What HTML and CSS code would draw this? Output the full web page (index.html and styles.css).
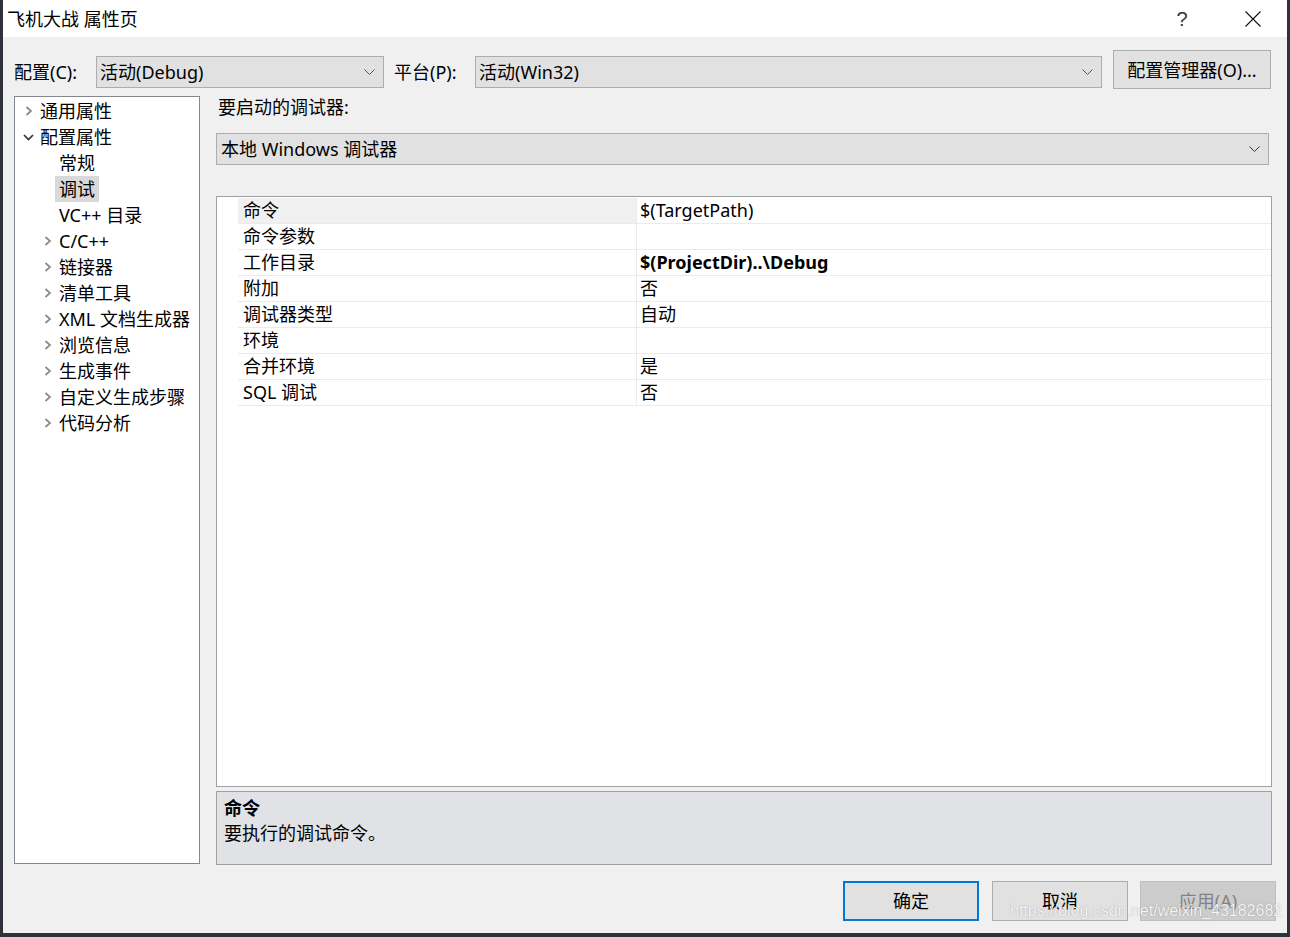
FILE: index.html
```html
<!DOCTYPE html>
<html lang="zh-CN">
<head>
<meta charset="utf-8">
<title>飞机大战 属性页</title>
<link rel="stylesheet" href="styles.css">
</head>
<body>
<div class="window">
  <div class="titlebar">
    <span class="title">飞机大战 属性页</span>
    <span class="help">?</span>
    <span class="close"><svg width="16" height="16" viewBox="0 0 16 16"><path d="M0.5 0.5 L15.5 15.5 M15.5 0.5 L0.5 15.5" stroke="#111" stroke-width="1.1" fill="none"/></svg></span>
  </div>
  <div class="content">
    <div class="config-row">
      <span class="cfg-label lab1">配置(C):</span>
      <div class="combo c1"><span class="val">活动(Debug)</span><svg class="chev" width="11" height="6" viewBox="0 0 11 6"><path d="M0.5 0.5 L5.5 5.5 L10.5 0.5" stroke="#555" stroke-width="1" fill="none"/></svg></div>
      <span class="cfg-label lab2">平台(P):</span>
      <div class="combo c2"><span class="val">活动(Win32)</span><svg class="chev" width="11" height="6" viewBox="0 0 11 6"><path d="M0.5 0.5 L5.5 5.5 L10.5 0.5" stroke="#555" stroke-width="1" fill="none"/></svg></div>
      <button class="btn mgr">配置管理器(O)...</button>
    </div>
    <div class="main">
      <div class="tree">
        <div class="item lv1"><span class="arrow"><svg class="col" width="8" height="10" viewBox="0 0 8 10"><path d="M1.5 1 L6 5 L1.5 9" stroke="#8a8a8a" stroke-width="1.7" fill="none"/></svg></span><span class="lbl">通用属性</span></div>
        <div class="item lv1"><span class="arrow"><svg class="exp" width="11" height="7" viewBox="0 0 11 7"><path d="M1 1 L5.5 5.5 L10 1" stroke="#333" stroke-width="1.7" fill="none"/></svg></span><span class="lbl">配置属性</span></div>
        <div class="item lv2"><span class="arrow"></span><span class="lbl">常规</span></div>
        <div class="item lv2 selected"><span class="arrow"></span><span class="lbl">调试</span></div>
        <div class="item lv2"><span class="arrow"></span><span class="lbl">VC++ 目录</span></div>
        <div class="item lv2"><span class="arrow"><svg class="col" width="8" height="10" viewBox="0 0 8 10"><path d="M1.5 1 L6 5 L1.5 9" stroke="#8a8a8a" stroke-width="1.7" fill="none"/></svg></span><span class="lbl">C/C++</span></div>
        <div class="item lv2"><span class="arrow"><svg class="col" width="8" height="10" viewBox="0 0 8 10"><path d="M1.5 1 L6 5 L1.5 9" stroke="#8a8a8a" stroke-width="1.7" fill="none"/></svg></span><span class="lbl">链接器</span></div>
        <div class="item lv2"><span class="arrow"><svg class="col" width="8" height="10" viewBox="0 0 8 10"><path d="M1.5 1 L6 5 L1.5 9" stroke="#8a8a8a" stroke-width="1.7" fill="none"/></svg></span><span class="lbl">清单工具</span></div>
        <div class="item lv2"><span class="arrow"><svg class="col" width="8" height="10" viewBox="0 0 8 10"><path d="M1.5 1 L6 5 L1.5 9" stroke="#8a8a8a" stroke-width="1.7" fill="none"/></svg></span><span class="lbl">XML 文档生成器</span></div>
        <div class="item lv2"><span class="arrow"><svg class="col" width="8" height="10" viewBox="0 0 8 10"><path d="M1.5 1 L6 5 L1.5 9" stroke="#8a8a8a" stroke-width="1.7" fill="none"/></svg></span><span class="lbl">浏览信息</span></div>
        <div class="item lv2"><span class="arrow"><svg class="col" width="8" height="10" viewBox="0 0 8 10"><path d="M1.5 1 L6 5 L1.5 9" stroke="#8a8a8a" stroke-width="1.7" fill="none"/></svg></span><span class="lbl">生成事件</span></div>
        <div class="item lv2"><span class="arrow"><svg class="col" width="8" height="10" viewBox="0 0 8 10"><path d="M1.5 1 L6 5 L1.5 9" stroke="#8a8a8a" stroke-width="1.7" fill="none"/></svg></span><span class="lbl">自定义生成步骤</span></div>
        <div class="item lv2"><span class="arrow"><svg class="col" width="8" height="10" viewBox="0 0 8 10"><path d="M1.5 1 L6 5 L1.5 9" stroke="#8a8a8a" stroke-width="1.7" fill="none"/></svg></span><span class="lbl">代码分析</span></div>
      </div>
      <div class="pane">
        <div class="pane-label">要启动的调试器:</div>
        <div class="combo big"><span class="val">本地 Windows 调试器</span><svg class="chev" width="11" height="6" viewBox="0 0 11 6"><path d="M0.5 0.5 L5.5 5.5 L10.5 0.5" stroke="#333" stroke-width="1" fill="none"/></svg></div>
        <div class="grid">
          <div class="row sel"><div class="name">命令</div><div class="value">$(TargetPath)</div></div>
          <div class="row"><div class="name">命令参数</div><div class="value"></div></div>
          <div class="row"><div class="name">工作目录</div><div class="value bold">$(ProjectDir)..\Debug</div></div>
          <div class="row"><div class="name">附加</div><div class="value">否</div></div>
          <div class="row"><div class="name">调试器类型</div><div class="value">自动</div></div>
          <div class="row"><div class="name">环境</div><div class="value"></div></div>
          <div class="row"><div class="name">合并环境</div><div class="value">是</div></div>
          <div class="row"><div class="name">SQL 调试</div><div class="value">否</div></div>
        </div>
        <div class="desc">
          <div class="desc-title">命令</div>
          <div class="desc-text">要执行的调试命令。</div>
        </div>
      </div>
    </div>
    <div class="buttons">
      <button class="btn dlg ok">确定</button>
      <button class="btn dlg cancel">取消</button>
      <button class="btn dlg apply">应用(A)</button>
    </div>
  </div>
  <div class="watermark">https://blog.csdn.net/weixin_43182682</div>
</div>
</body>
</html>
```

FILE: styles.css
```css
* { box-sizing: border-box; }
html, body { margin: 0; padding: 0; }
body {
  width: 1290px;
  height: 937px;
  overflow: hidden;
  background: #2f323b;
  font-family: "Noto Sans", "Noto Sans CJK SC", sans-serif;
  font-size: 18px;
  color: #000;
}
.window {
  position: relative;
  margin-left: 3px;
  width: 1284px;
  height: 933px;
  background: #f0f0f0;
  display: flex;
  flex-direction: column;
}
.titlebar {
  flex: none;
  height: 37px;
  background: #fff;
  display: flex;
  align-items: center;
  padding: 0 26px 0 4px;
}
.title { flex: 1; line-height: 24px; white-space: nowrap; }
.help {
  width: 14px;
  text-align: center;
  font-family: "Liberation Sans", sans-serif;
  font-size: 20px;
  line-height: 24px;
  color: #333;
  margin-right: 56px;
}
.close { width: 16px; height: 16px; }
.close svg { display: block; }

.content {
  flex: 1;
  display: flex;
  flex-direction: column;
  padding: 13px 15px 0 11px;
}
.config-row { display: flex; align-items: flex-start; height: 39px; flex: none; }
.cfg-label { margin-top: 6px; line-height: 32px; white-space: nowrap; }
.lab1 { width: 82px; }
.lab2 { margin-left: 10px; width: 81px; }
.combo {
  height: 32px;
  background: #e1e1e1;
  border: 1px solid #adadad;
  display: flex;
  align-items: center;
  padding: 0 8px 0 3px;
}
.combo .val { flex: 1; white-space: nowrap; line-height: 30px; }
.chev { display: block; flex: none; }
.c1 { width: 288px; margin-top: 6px; }
.c2 { width: 627px; margin-top: 6px; }
.btn {
  font: inherit;
  color: #000;
  background: #e1e1e1;
  border: 1px solid #adadad;
  padding: 0;
  margin: 0;
  line-height: 24px;
}
.mgr { margin-left: 11px; width: 158px; height: 39px; }

.main { display: flex; margin-top: 7px; height: 769px; flex: none; }
.tree {
  width: 186px;
  height: 768px;
  background: #fff;
  border: 1px solid #828790;
  padding-top: 1px;
}
.item { display: flex; align-items: center; height: 26px; white-space: nowrap; }
.item.lv1 { padding-left: 6px; }
.item.lv2 { padding-left: 25px; }
.arrow { width: 15px; height: 26px; flex: none; display: flex; align-items: center; }
.arrow .col { display: block; margin-left: 4px; }
.arrow .exp { display: block; margin-left: 2px; }
.lbl { padding: 0 4px; line-height: 26px; }
.item.selected .lbl { background: #d9d9d9; }

.pane { margin-left: 16px; width: 1056px; display: flex; flex-direction: column; }
.pane-label { line-height: 22px; padding-left: 2px; white-space: nowrap; }
.combo.big { margin-top: 15px; width: 1053px; padding-left: 4px; }
.grid {
  margin-top: 31px;
  height: 591px;
  background: #fff;
  border: 1px solid #a0a0a0;
  padding-top: 1px;
}
.row { display: flex; margin-left: 21px; height: 26px; border-bottom: 1px solid #ebebeb; }
.name {
  width: 399px;
  padding-left: 5px;
  border-right: 1px solid #ebebeb;
  line-height: 25px;
  white-space: nowrap;
}
.value { flex: 1; padding-left: 3px; line-height: 25px; white-space: nowrap; }
.value.bold { font-weight: bold; }
.row.sel .name { background: #f0f0f0; }

.desc {
  margin-top: 4px;
  height: 74px;
  background: #e1e2e6;
  border: 1px solid #a0a0a0;
  padding: 4px 0 0 7px;
}
.desc-title { font-weight: bold; line-height: 25px; }
.desc-text { line-height: 25px; }

.buttons { display: flex; justify-content: flex-end; margin-top: 16px; margin-right: -4px; }
.dlg { width: 136px; height: 40px; }
.ok { border: 2px solid #0078d7; margin-right: 13px; }
.cancel { margin-right: 12px; }
.apply { background: #cccccc; border-color: #bfbfbf; color: #838383; }

.watermark {
  position: absolute;
  left: 1007px;
  top: 901px;
  font-family: "Liberation Sans", sans-serif;
  font-size: 16px;
  line-height: 20px;
  color: rgba(255, 255, 255, 0.92);
  text-shadow: 0 0 1px rgba(80, 80, 80, 0.6);
  white-space: nowrap;
  pointer-events: none;
}
```
